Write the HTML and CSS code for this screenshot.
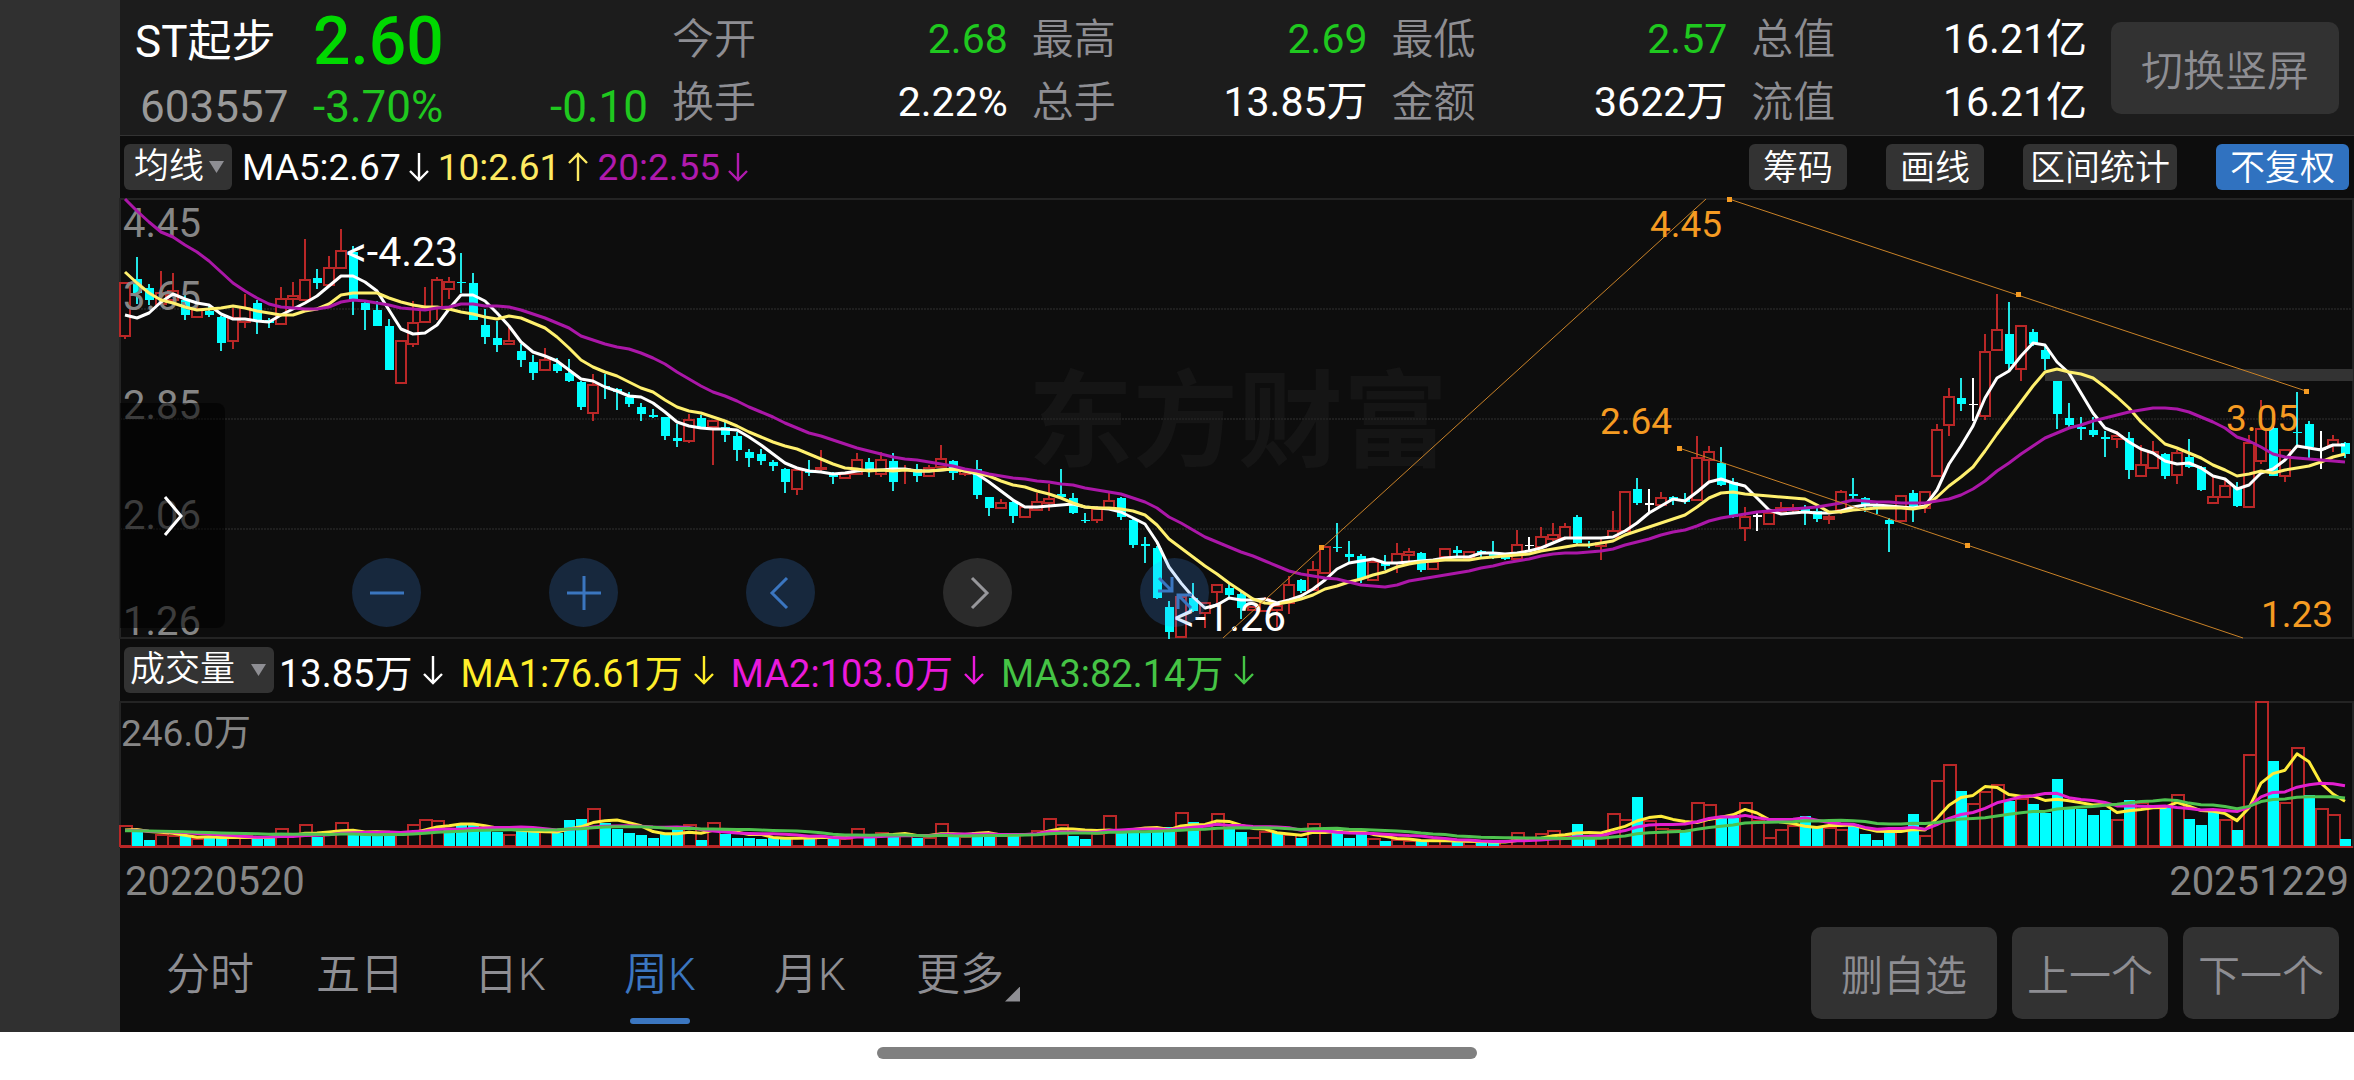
FILE: index.html
```html
<!DOCTYPE html>
<html lang="zh-CN">
<head>
    <meta charset="UTF-8">
    <meta name="viewport" content="width=device-width, initial-scale=1.0">
    <title>ST起步 603557</title>
    <link rel="stylesheet" href="styles.css">
</head>
<body>
    <!-- Arrow shapes shared by the indicator readouts -->
    <svg class="defs" aria-hidden="true">
        <symbol id="arrow-down" viewBox="0 0 20 30">
            <path d="M10 1V28M1 19L10 28L19 19" fill="none" stroke="currentColor" stroke-width="2.4"/>
        </symbol>
        <symbol id="arrow-up" viewBox="0 0 20 30">
            <path d="M10 29V2M1 11L10 2L19 11" fill="none" stroke="currentColor" stroke-width="2.4"/>
        </symbol>
    </svg>

    <div class="screen">
        <main class="app">
            <header class="quote">
                <div class="stock">
                    <h1 class="stock-name">ST起步</h1>
                    <span class="price">2.60</span>
                    <span class="stock-code">603557</span>
                    <span class="change">-3.70%</span>
                    <span class="change diff">-0.10</span>
                </div>
                <dl class="stats">
                    <div><dt>今开</dt><dd class="down">2.68</dd></div>
                    <div><dt>最高</dt><dd class="down">2.69</dd></div>
                    <div><dt>最低</dt><dd class="down">2.57</dd></div>
                    <div><dt>总值</dt><dd>16.21亿</dd></div>
                    <div><dt>换手</dt><dd>2.22%</dd></div>
                    <div><dt>总手</dt><dd>13.85万</dd></div>
                    <div><dt>金额</dt><dd>3622万</dd></div>
                    <div><dt>流值</dt><dd>16.21亿</dd></div>
                </dl>
                <button type="button" class="soft-button rotate-button">切换竖屏</button>
            </header>

            <div class="toolbar">
                <button type="button" class="chip">均线<i class="caret"></i></button>
                <span class="reading white">MA5:2.67<svg class="arrow"><use href="#arrow-down"/></svg></span>
                <span class="reading yellow">10:2.61<svg class="arrow"><use href="#arrow-up"/></svg></span>
                <span class="reading purple">20:2.55<svg class="arrow"><use href="#arrow-down"/></svg></span>
                <div class="tools">
                    <button type="button" class="chip">筹码</button>
                    <button type="button" class="chip">画线</button>
                    <button type="button" class="chip long">区间统计</button>
                    <button type="button" class="chip active">不复权</button>
                </div>
            </div>

            <section class="plot">
                <svg id="price-chart" class="chart" viewBox="0 0 2234 441" role="img" aria-label="周K线"></svg>
                <button type="button" class="drawer" aria-label="展开">
                    <svg viewBox="0 0 20 42"><path d="M2 2L18 21L2 40" fill="none" stroke="#fff" stroke-width="3"/></svg>
                </button>
                <div class="controls">
                    <button type="button" class="round" aria-label="缩小">
                        <svg viewBox="0 0 36 36"><path d="M1 18H35"/></svg>
                    </button>
                    <button type="button" class="round" aria-label="放大">
                        <svg viewBox="0 0 36 36"><path d="M1 18H35M18 1V35"/></svg>
                    </button>
                    <button type="button" class="round" aria-label="左移">
                        <svg viewBox="0 0 36 36"><path d="M24 3L9 18L24 33"/></svg>
                    </button>
                    <button type="button" class="round muted" aria-label="右移">
                        <svg viewBox="0 0 36 36"><path d="M12 3L27 18L12 33"/></svg>
                    </button>
                    <button type="button" class="round" aria-label="收起">
                        <svg viewBox="0 0 36 36"><path d="M2 3L15 16M15 2V16H1M34 33L21 20M21 34V20H35"/></svg>
                    </button>
                </div>
            </section>

            <div class="toolbar">
                <button type="button" class="chip volume-chip">成交量<i class="caret"></i></button>
                <span class="reading wide white">13.85万<svg class="arrow"><use href="#arrow-down"/></svg></span>
                <span class="reading wide bright-yellow">MA1:76.61万<svg class="arrow"><use href="#arrow-down"/></svg></span>
                <span class="reading wide magenta">MA2:103.0万<svg class="arrow"><use href="#arrow-down"/></svg></span>
                <span class="reading wide green">MA3:82.14万<svg class="arrow"><use href="#arrow-down"/></svg></span>
            </div>

            <section class="plot">
                <svg id="volume-chart" class="chart" viewBox="0 0 2234 147" role="img" aria-label="成交量"></svg>
            </section>

            <div class="dates">
                <time datetime="2022-05-20">20220520</time>
                <time datetime="2025-12-29">20251229</time>
            </div>

            <footer class="bottom">
                <nav class="tabs">
                    <a href="#time">分时</a>
                    <a href="#five">五日</a>
                    <a href="#day">日K</a>
                    <a href="#week" class="selected">周K</a>
                    <a href="#month">月K</a>
                    <a href="#more" class="more">更多</a>
                </nav>
                <div class="actions">
                    <button type="button" class="soft-button">删自选</button>
                    <button type="button" class="soft-button">上一个</button>
                    <button type="button" class="soft-button">下一个</button>
                </div>
            </footer>
        </main>
    </div>
    <div class="home-bar"><span></span></div>

    <script src="chart.js"></script>
</body>
</html>
```
FILE: styles.css
```css
* {
    margin: 0;
    padding: 0;
    box-sizing: border-box;
}

body {
    min-height: 100vh;
    display: flex;
    flex-direction: column;
    background-color: #fff;
    color: #fff;
    font-family: Roboto, "Noto Sans CJK SC", sans-serif;
    font-size: 42px;
    font-weight: 400;
}

button {
    border: none;
    font: inherit;
    color: inherit;
    cursor: pointer;
}

a {
    color: inherit;
    text-decoration: none;
}

.defs {
    position: absolute;
    width: 0;
    height: 0;
}

.screen {
    flex: 1;
    display: flex;
    padding-left: 120px;
    background-color: #303030;
}

.app {
    flex: 1;
    display: flex;
    flex-direction: column;
    background-color: #0d0d0d;
}

/* Quote header */
.quote {
    display: flex;
    align-items: center;
    height: 136px;
    padding: 0 15px;
    background-color: #1c1c1c;
    border-bottom: 1px solid #333;
}

.stock {
    display: grid;
    grid-template-columns: 178px 1fr auto;
    grid-template-rows: 70px 60px;
    align-items: center;
    width: 513px;
    padding-top: 8px;
    line-height: 60px;
}

.stock-name {
    font-size: 44px;
    font-weight: 400;
}

.price {
    grid-column: 2 / 4;
    font-size: 66px;
    font-weight: 500;
    color: #00d800;
}

.stock-code {
    padding-left: 5px;
    font-size: 44px;
    color: #999;
}

.change,
.down {
    color: #1fc81f;
}

.change {
    font-size: 44px;
}

.stats {
    flex: 1;
    display: grid;
    grid-template-columns: repeat(4, 1fr);
    column-gap: 24px;
    margin: 0 24px;
    padding-top: 7px;
    line-height: 63px;
}

.stats div {
    display: flex;
    justify-content: space-between;
    white-space: nowrap;
}

.stats dt {
    font-weight: 350;
    color: #8e8e93;
}

.stats dd {
    font-size: 41px;
}

.soft-button {
    height: 92px;
    padding: 0 30px;
    border-radius: 10px;
    background-color: #323232;
    color: #8e8e93;
    font-weight: 350;
    white-space: nowrap;
}

/* Indicator rows */
.toolbar {
    display: flex;
    align-items: center;
    height: 62px;
    padding: 0 5px 0 4px;
    white-space: nowrap;
}

.chip {
    height: 46px;
    padding: 0 14px;
    border-radius: 6px;
    background-color: #333;
    font-size: 35px;
    font-weight: 350;
    line-height: 50px;
}

.toolbar > .chip {
    display: flex;
    align-items: center;
    gap: 5px;
    padding: 0 8px 0 10px;
    margin-right: 10px;
}

.toolbar > .volume-chip {
    gap: 16px;
    padding-left: 6px;
    margin-right: 5px;
}

.chip.long {
    padding: 0 7px;
}

.chip.active {
    background-color: #3072c0;
}

.caret {
    width: 15px;
    height: 12px;
    background-color: #8e8e93;
    clip-path: polygon(0 0, 100% 0, 50% 100%);
}

.tools {
    display: flex;
    gap: 39px;
    margin-left: auto;
}

.reading {
    display: flex;
    align-items: center;
    gap: 8px;
    margin-right: 9px;
    font-size: 37px;
}

.reading.wide {
    gap: 11px;
    margin-right: 17px;
    font-size: 38px;
}

.arrow {
    width: 20px;
    height: 30px;
}

.white {
    color: #fff;
}

.yellow {
    color: #fdea62;
}

.purple {
    color: #b01aae;
}

.bright-yellow {
    color: #ffee2a;
}

.magenta {
    color: #ea1adb;
}

.green {
    color: #45c445;
}

/* Charts */
.plot {
    position: relative;
}

.chart {
    display: block;
    width: 100%;
    overflow: visible;
}

.frame {
    fill: none;
    stroke: #242424;
    stroke-width: 2;
}

.grid-line {
    stroke: #1f1f1f;
    stroke-width: 2;
    stroke-dasharray: 2 1;
}

.watermark {
    font-size: 105px;
    font-weight: 700;
    fill: #151515;
}

.axis-label {
    font-size: 40px;
    fill: #868686;
}

.volume-label {
    font-size: 37px;
    fill: #868686;
}

.extreme-label {
    font-size: 41px;
    fill: #fff;
}

.draw-label {
    font-size: 37px;
    fill: #f59b22;
}

.draw-line {
    fill: none;
    stroke: #c98228;
    stroke-width: 1;
}

.draw-handle {
    fill: #f59b22;
}

.gap-band {
    fill: #333;
}

.rise {
    fill: #0d0d0d;
    stroke: #b92727;
    stroke-width: 2;
}

.fall {
    fill: #00ffff;
}

.flat {
    fill: #fff;
}

.rise-wick {
    fill: #b92727;
}

.fall-wick {
    fill: #22e6e6;
}

.line {
    fill: none;
    stroke-width: 3;
    stroke-linejoin: round;
}

.line.ma5 {
    stroke: #fff;
}

.line.ma10 {
    stroke: #fff06e;
}

.line.ma20 {
    stroke: #ab17a8;
}

.line.vol5 {
    stroke: #ffec3a;
}

.line.vol10 {
    stroke: #e31fd0;
}

.line.vol20 {
    stroke: #4fc24f;
}

.drawer {
    position: absolute;
    left: 0;
    bottom: 11px;
    width: 105px;
    height: 225px;
    border-radius: 0 8px 8px 0;
    background-color: rgba(0, 0, 0, 0.55);
}

.drawer svg {
    display: block;
    width: 20px;
    height: 42px;
    margin: 0 auto;
}

.controls {
    position: absolute;
    left: 232px;
    bottom: 12px;
    display: flex;
    gap: 128px;
}

.round {
    display: flex;
    align-items: center;
    justify-content: center;
    width: 69px;
    height: 69px;
    border-radius: 50%;
    background-color: rgba(64, 150, 255, 0.2);
    color: #3b76c0;
}

.round.muted {
    background-color: #2b2b2b;
    color: #97979b;
}

.round svg {
    width: 36px;
    height: 36px;
    fill: none;
    stroke: currentColor;
    stroke-width: 3;
}

/* Dates and period tabs */
.dates {
    display: flex;
    justify-content: space-between;
    padding: 9px 5px 0;
    font-size: 40px;
    line-height: 50px;
    color: #868686;
}

.bottom {
    flex: 1;
    display: flex;
    align-items: center;
    justify-content: space-between;
    padding: 14px 15px 8px;
    color: #8e8e93;
}

.tabs {
    display: flex;
    font-size: 44px;
    font-weight: 350;
}

.tabs a {
    position: relative;
    width: 150px;
    padding-top: 4px;
    line-height: 98px;
    text-align: center;
}

.tabs .selected {
    color: #3b76c0;
}

.tabs .selected::after {
    content: "";
    position: absolute;
    left: 45px;
    bottom: 0;
    width: 60px;
    height: 6px;
    border-radius: 3px;
    background-color: #3b76c0;
}

.tabs .more::after {
    content: "";
    position: absolute;
    right: 15px;
    bottom: 22px;
    width: 15px;
    height: 15px;
    background-color: #8e8e93;
    clip-path: polygon(100% 0, 100% 100%, 0 100%);
}

.actions {
    display: flex;
    gap: 15px;
}

.actions .soft-button {
    padding: 0 15px;
}

.actions .soft-button:first-child {
    padding: 0 30px;
}

.home-bar {
    display: flex;
    align-items: center;
    justify-content: center;
    height: 48px;
    padding-bottom: 6px;
}

.home-bar span {
    width: 600px;
    height: 12px;
    border-radius: 6px;
    background-color: #808080;
}
```
FILE: chart.js
```javascript
const SVG_NS = 'http://www.w3.org/2000/svg';
const STEP = 12;

// One entry per week: r = rise, c = fall, w = flat, then high, body top, body bottom, low
const candles = `
r84,84,137,140 c58,80,94,105 c85,89,101,106 r72,94,105,106 r74,92,101,103 c91,101,116,121 r108,110,118,119 c106,112,116,118
c117,118,144,152 r109,119,142,150 r95,109,123,129 c101,104,121,135 c119,121,124,129 r88,100,125,126 r83,97,100,109 r40,81,101,102
c70,79,84,90 r57,69,86,87 r30,52,69,69 c47,53,100,116 c101,104,111,131 c102,111,127,127 c120,127,171,171 r141,142,184,184
r102,124,145,148 r88,110,123,124 r78,81,108,121 r78,83,90,100 c54,83,84,94 c74,84,121,121 c110,126,138,145 c122,139,146,153
r128,142,145,146 c145,152,161,168 c156,163,174,181 r149,161,171,172 c159,165,172,174 c160,174,182,183 c182,183,208,211 r175,186,214,222
c175,187,188,200 c189,190,193,211 c193,198,205,208 c204,208,215,222 c210,216,218,219 c218,218,237,241 c225,239,242,248 r215,221,242,244
c216,219,228,229 r221,222,228,266 c223,228,236,243 c233,237,251,262 c250,253,259,268 c250,255,262,266 c261,263,267,272 c269,270,283,294
r270,271,290,296 c261,272,274,277 r251,269,270,272 c273,275,278,285 r273,275,279,280 r254,261,275,275 c259,263,271,278 r253,261,275,278
c254,262,283,292 r266,270,271,285 c265,270,277,283 r266,269,277,278 r246,260,268,269 c261,262,274,281 r270,272,275,277 c261,270,296,300
c298,298,309,317 r300,304,309,310 c301,303,317,324 r308,308,318,319 r294,303,311,312 r285,300,304,312 c270,295,298,299 c294,299,314,315
c314,321,322,324 r307,310,321,324 r294,302,309,311 c298,299,318,321 c318,321,346,349 c338,345,347,364 c347,349,399,400 c402,408,433,440
r395,398,438,438 c384,399,412,413 r403,404,414,429 r385,386,393,404 c384,389,396,398 c393,395,409,420 r407,408,411,412 r398,400,412,412
r404,407,411,428 r377,386,404,415 c380,381,392,394 r362,371,391,392 r347,348,374,375 c324,348,349,353 c342,355,358,363 c355,357,380,384
r361,363,381,382 c356,364,367,371 r344,355,364,374 r349,353,356,362 c353,354,371,373 r361,363,370,371 r349,350,358,358 c347,351,354,358
r352,353,359,360 c351,352,354,358 c342,355,358,360 c356,358,360,361 r331,346,360,361 w338,346,347,353 r328,338,348,349 r324,336,340,342
r324,328,339,341 c316,318,344,345 c342,345,346,349 r339,344,347,361 r312,332,338,339 r293,293,332,332 c279,290,304,306 w290,304,306,313
r293,299,306,308 c297,298,301,306 c294,300,303,305 r237,259,301,302 r247,253,261,282 c248,264,286,287 c279,283,318,319 r308,318,329,342
w313,316,318,332 r311,314,325,326 r303,309,312,316 r305,309,311,314 c306,310,314,326 c308,312,320,323 r316,318,320,325 r291,293,311,315
c279,295,297,301 c298,299,307,313 c303,306,310,315 c319,321,325,353 r296,297,322,322 c291,294,308,323 r293,293,309,314 r225,231,277,278
r189,198,226,237 c179,199,205,212 w179,205,206,222 r135,153,217,221 r95,131,151,152 c103,135,165,171 r126,127,170,182 c130,133,145,147
c146,151,160,171 c182,182,215,230 c204,219,226,228 c218,228,230,241 c218,231,236,238 c232,238,240,258 r232,237,240,249 c233,239,271,280
r246,266,277,278 r242,253,269,270 c254,255,277,280 r251,254,276,285 c240,258,268,269 c267,268,291,292 r277,298,304,305 r279,287,298,299
c283,288,307,308 r236,244,308,309 r201,230,262,265 c218,229,277,277 r250,251,277,283 c193,233,234,248 c222,225,248,259 w232,249,251,270
r236,241,246,253 c243,244,255,259`.trim().split(/\s+/).map(item => ({
    kind: item[0],
    values: item.slice(1).split(',').map(Number)
}));

const ma5 = [
    116, 119, 114, 103, 95, 100, 104, 106, 115, 120, 120, 122, 123, 116, 110, 104, 97, 87, 77, 77,
    83, 92, 111, 130, 135, 134, 126, 110, 96, 96, 102, 114, 127, 143, 153, 157, 162, 171, 180, 182,
    188, 192, 197, 198, 204, 213, 223, 227, 229, 230, 230, 231, 238, 246, 255, 264, 269, 272, 273, 275,
    274, 272, 271, 271, 270, 270, 272, 272, 271, 270, 272, 275, 283, 292, 301, 308, 308, 307, 306, 305,
    308, 309, 310, 313, 319, 325, 343, 368, 384, 398, 409, 406, 399, 401, 401, 400, 404, 401, 397, 390,
    381, 370, 364, 362, 360, 364, 364, 363, 362, 361, 359, 358, 358, 354, 354, 355, 354, 352, 349, 344,
    339, 339, 339, 339, 338, 332, 324, 314, 307, 300, 302, 293, 283, 280, 284, 287, 299, 311, 315, 314,
    313, 314, 314, 312, 308, 306, 306, 307, 308, 309, 307, 291, 265, 247, 227, 199, 179, 172, 157, 144,
    146, 163, 174, 194, 214, 229, 234, 243, 250, 254, 262, 265, 264, 269, 277, 280, 290, 286, 274, 270,
    261, 247, 249, 251, 246, 246
];

const ma10 = [
    73, 84, 94, 101, 104, 108, 111, 110, 109, 107, 109, 112, 114, 116, 116, 112, 110, 105, 96, 94,
    94, 94, 99, 103, 106, 108, 108, 110, 113, 115, 118, 120, 117, 119, 124, 129, 138, 149, 161, 168,
    173, 177, 183, 189, 193, 201, 208, 212, 214, 218, 222, 227, 233, 238, 243, 247, 250, 255, 260, 265,
    269, 270, 272, 271, 272, 271, 272, 272, 271, 270, 272, 274, 277, 282, 286, 288, 292, 295, 299, 304,
    308, 309, 309, 310, 312, 316, 326, 340, 349, 358, 367, 375, 384, 392, 400, 404, 405, 403, 400, 396,
    390, 387, 383, 380, 376, 373, 368, 365, 363, 362, 361, 361, 361, 359, 358, 357, 356, 355, 352, 350,
    348, 346, 346, 344, 342, 336, 332, 328, 324, 320, 316, 308, 299, 294, 293, 295, 296, 297, 298, 299,
    300, 306, 313, 313, 311, 310, 309, 309, 309, 310, 308, 298, 287, 278, 268, 252, 235, 219, 203, 187,
    173, 170, 173, 175, 179, 188, 198, 209, 223, 234, 245, 249, 254, 259, 266, 271, 277, 275, 272, 274,
    271, 269, 267, 263, 258, 255
];

const ma20 = [
    0, 12, 23, 33, 38, 46, 53, 62, 73, 84, 92, 99, 105, 108, 109, 110, 110, 108, 103, 101,
    102, 104, 106, 109, 110, 111, 109, 108, 105, 105, 107, 107, 108, 111, 115, 119, 124, 129, 137, 141,
    145, 148, 150, 154, 159, 165, 173, 180, 187, 193, 197, 202, 208, 213, 218, 224, 229, 234, 237, 241,
    245, 249, 252, 255, 258, 260, 261, 263, 265, 267, 270, 272, 275, 277, 279, 280, 282, 283, 285, 286,
    289, 291, 293, 295, 299, 303, 309, 318, 324, 331, 338, 343, 348, 353, 357, 362, 367, 372, 375, 377,
    379, 380, 383, 386, 387, 388, 386, 382, 380, 378, 376, 374, 372, 369, 367, 364, 362, 360, 357, 355,
    354, 354, 353, 352, 350, 346, 343, 340, 336, 333, 331, 327, 322, 319, 317, 315, 313, 312, 311, 310,
    309, 308, 306, 304, 301, 302, 303, 303, 304, 304, 304, 302, 300, 296, 290, 282, 272, 264, 255, 247,
    239, 234, 229, 226, 222, 219, 216, 213, 211, 209, 209, 210, 213, 218, 223, 229, 238, 242, 248, 255,
    258, 259, 260, 261, 262, 263
];

// Bar heights, negative for a falling week
const volumes = [
    20, -17, -6, 11, 10, -10, 7, -8, -8, 9, 10, -8, -8, 17, 10, 21, -9, 13, 23, -13,
    -12, -10, -11, 12, 21, 26, 25, -17, -21, -21, -17, -14, 11, -16, -16, 14, -13, -26, -27, 37,
    -23, -17, -13, -11, -8, -12, -17, 21, -6, 23, -12, -8, -8, -7, -8, -8, 8, -9, 9, -8,
    7, 17, -9, 13, -11, 12, -8, 8, 22, -11, 9, -14, -11, 10, -11, 12, 15, 27, 21, -10,
    -7, 12, 30, -15, -18, -15, -15, -19, 33, -24, 17, 32, -17, -14, 8, 14, -13, 11, -8, 22,
    14, -17, -8, -12, 7, -5, 6, 5, -5, 5, 5, -5, 4, -3, -3, 5, 13, 6, 12, 15,
    10, -22, -8, 10, 32, 26, -49, 25, 17, 16, -16, 43, 41, -28, -28, 43, 25, 8, 16, 20,
    -30, -19, 18, 16, -22, -12, -6, -16, 16, -32, 10, 65, 81, -55, 42, 54, 61, -45, 47, -42,
    -33, -67, -37, -37, -31, -36, 26, -46, 43, 40, -38, 51, -27, -21, -37, 26, -16, 91, 144, -85,
    43, 98, -51, 37, 31, -7
];

function add(parent, name, attrs, text) {
    const node = document.createElementNS(SVG_NS, name);
    for (const key in attrs) {
        node.setAttribute(key, attrs[key]);
    }
    if (text) {
        node.textContent = text;
    }
    parent.appendChild(node);
    return node;
}

function drawLine(parent, values, className) {
    const points = values.map((y, i) => `${5 + i * STEP},${y}`).join(' ');
    add(parent, 'polyline', { points, class: `line ${className}` });
}

function drawCandle(parent, candle, i) {
    const [high, top, bottom, low] = candle.values;
    const x = i * STEP;
    const height = Math.max(bottom - top, 1);

    if (candle.kind === 'r') {
        add(parent, 'rect', { x: x + 4, y: high, width: 2, height: Math.max(top - high, 0), class: 'rise-wick' });
        add(parent, 'rect', { x: x + 4, y: bottom, width: 2, height: Math.max(low - bottom, 0), class: 'rise-wick' });
        add(parent, 'rect', { x, y: top, width: 10, height, class: 'rise' });
        return;
    }

    const flat = candle.kind === 'w';
    add(parent, 'rect', { x: x + 4, y: high, width: 2, height: low - high, class: flat ? 'flat' : 'fall-wick' });
    add(parent, 'rect', { x: x + 1, y: top, width: 9, height, class: flat ? 'flat' : 'fall' });
}

function average(values, size) {
    const padded = new Array(size).fill(15).concat(values.map(Math.abs));
    return values.map((_, i) => {
        const part = padded.slice(i + 1, i + 1 + size);
        return 144 - part.reduce((sum, v) => sum + v, 0) / size;
    });
}

function drawPriceChart() {
    const svg = document.getElementById('price-chart');
    const plot = add(svg, 'g', { transform: 'translate(0 1)' });

    add(plot, 'text', { x: 908, y: 259, class: 'watermark' }, '东方财富');
    add(plot, 'rect', { x: 0, y: 0, width: 2233, height: 439, class: 'frame' });
    [110, 220, 330].forEach(y => add(plot, 'line', { x1: 0, y1: y, x2: 2233, y2: y, class: 'grid-line' }));
    add(plot, 'rect', { x: 1925, y: 170, width: 308, height: 12, class: 'gap-band' });

    candles.forEach((candle, i) => drawCandle(plot, candle, i));

    [['4.45', 38], ['3.65', 111], ['2.85', 220], ['2.06', 330], ['1.26', 436]].forEach(([text, y]) => {
        add(plot, 'text', { x: 3, y, class: 'axis-label' }, text);
    });

    drawLine(plot, ma5, 'ma5');
    drawLine(plot, ma10, 'ma10');
    drawLine(plot, ma20, 'ma20');

    add(plot, 'text', { x: 226, y: 67, class: 'extreme-label' }, '<-4.23');
    add(plot, 'text', { x: 1054, y: 432, class: 'extreme-label' }, '<-1.26');

    // Trend lines drawn by the user
    ['1103,439 1586,0', '1609,0 2186,192', '1559,249 2123,439'].forEach(points => {
        add(plot, 'polyline', { points, class: 'draw-line' });
    });
    [[1201, 348], [1609, 0], [1898, 95], [2186, 192], [1559, 249], [1847, 346]].forEach(([x, y]) => {
        add(plot, 'rect', { x: x - 2, y: y - 2, width: 5, height: 5, class: 'draw-handle' });
    });
    [['4.45', 1530, 38], ['2.64', 1480, 235], ['3.05', 2106, 232], ['1.23', 2141, 428]].forEach(([text, x, y]) => {
        add(plot, 'text', { x, y, class: 'draw-label' }, text);
    });
}

function drawVolumeChart() {
    const svg = document.getElementById('volume-chart');
    const plot = add(svg, 'g', { transform: 'translate(0 1)' });

    add(plot, 'rect', { x: 0, y: 0, width: 2233, height: 145, class: 'frame' });
    add(plot, 'text', { x: 1, y: 44, class: 'volume-label' }, '246.0万');

    volumes.forEach((value, i) => {
        const height = Math.abs(value);
        if (value > 0) {
            add(plot, 'rect', { x: i * STEP, y: 144 - height, width: 12, height, class: 'rise' });
        } else {
            add(plot, 'rect', { x: i * STEP, y: 144 - height, width: 11, height, class: 'fall' });
        }
    });
    add(plot, 'rect', { x: 0, y: 144, width: 2233, height: 2, class: 'rise-wick' });

    drawLine(plot, average(volumes, 5), 'vol5');
    drawLine(plot, average(volumes, 10), 'vol10');
    drawLine(plot, average(volumes, 20), 'vol20');
}

drawPriceChart();
drawVolumeChart();
```
